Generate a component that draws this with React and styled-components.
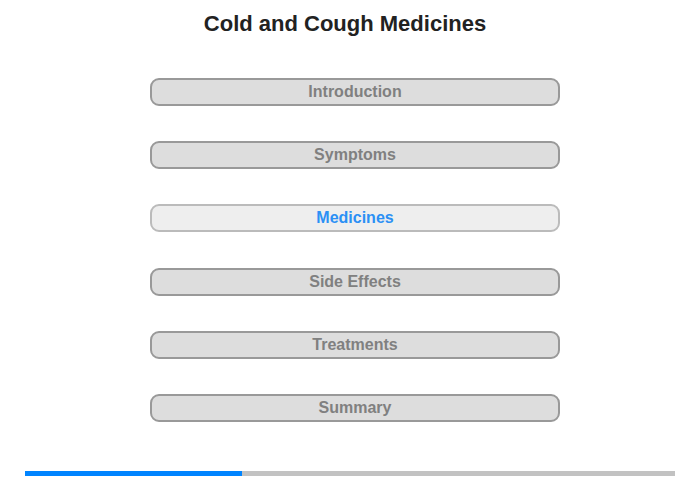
import styled, { createGlobalStyle } from 'styled-components';

const GlobalStyle = createGlobalStyle`
  html, body {
    margin: 0;
    padding: 0;
    background: #fff;
  }
  body {
    font-family: 'Liberation Sans', Arial, sans-serif;
  }
`

const Page = styled.div`
  width: 700px;
  height: 480px;
  display: flex;
  flex-direction: column;
  align-items: center;
`
const Title = styled.h1`
  margin: 11px 10px 0 0;
  font-size: 22px;
  line-height: 26px;
  font-weight: 700;
  color: #222;
`
const Menu = styled.nav`
  margin-top: 41px;
  margin-left: 10px;
  display: flex;
  flex-direction: column;
  gap: 35.2px;
`
const MenuButton = styled.div`
  box-sizing: border-box;
  width: 410px;
  height: 28px;
  border: 2px solid ${p => (p.$active ? '#bbbbbb' : '#999999')};
  border-radius: 9px;
  background: ${p => (p.$active ? '#eeeeee' : '#dddddd')};
  color: ${p => (p.$active ? '#2b90f5' : '#808080')};
  font-size: 16px;
  font-weight: 700;
  display: flex;
  align-items: center;
  justify-content: center;
  cursor: pointer;
`
const Progress = styled.div`
  margin-top: auto;
  margin-bottom: 4px;
  width: 650px;
  height: 5px;
  background: #c2c2c2;
  display: flex;
`
const ProgressFill = styled.div`
  height: 100%;
  background: #0084ff;
`

const sections = ['Introduction', 'Symptoms', 'Medicines', 'Side Effects', 'Treatments', 'Summary']
const current = 2

const App = () => {
  return (
    <Page>
      <GlobalStyle />
      <Title>Cold and Cough Medicines</Title>
      <Menu>
        {sections.map((s, i) => (
          <MenuButton key={s} $active={i === current}>{s}</MenuButton>
        ))}
      </Menu>
      <Progress>
        <ProgressFill style={{ width: `${(217 / 650) * 100}%` }} />
      </Progress>
    </Page>
  )
}

export default App
